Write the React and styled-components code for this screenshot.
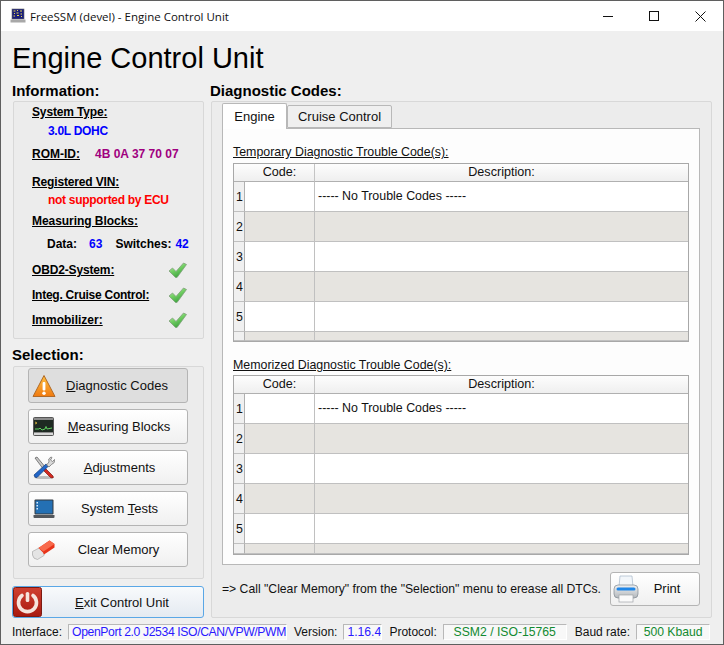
import React from 'react'
import styled, { createGlobalStyle } from 'styled-components'

const Global = createGlobalStyle`
  html, body { margin: 0; padding: 0; background: #efefef; }
  * { box-sizing: border-box; }
`

const Win = styled.div`
  width: 724px;
  height: 645px;
  overflow: hidden;
  display: flex;
  flex-direction: column;
  background: #efefef;
  border: 1px solid #5f5f5f;
  font-family: "Liberation Sans", Arial, sans-serif;
  color: #000;
`

const TitleBar = styled.div`
  height: 30px;
  flex: none;
  background: #fff;
  display: flex;
  align-items: center;
  padding-left: 9px;
  font: 11.5px "Open Sans", "Noto Sans", sans-serif;
`

const TitleText = styled.span`
  margin-left: 4px;
  flex: 1;
  color: #111;
`

const WinBtn = styled.div`
  width: 46px;
  height: 30px;
  display: flex;
  align-items: center;
  justify-content: center;
`

const Heading = styled.h1`
  margin: 0;
  padding: 9px 0 0 11px;
  height: 51px;
  flex: none;
  font-size: 29px;
  line-height: 36px;
  font-weight: 400;
  color: #000;
`

const Columns = styled.div`
  display: flex;
  flex: none;
  height: 537px;
  padding-left: 11px;
`

const LeftCol = styled.div`
  width: 193px;
  display: flex;
  flex-direction: column;
`

const RightCol = styled.div`
  width: 504px;
  margin-left: 5px;
  display: flex;
  flex-direction: column;
`

const Section = styled.div`
  font-size: 15px;
  line-height: 18px;
  font-weight: 700;
  height: 18px;
  margin-top: ${p => p.$top || 0}px;
`

const Panel = styled.div`
  border: 1px solid #d8d8d8;
  border-radius: 2px;
  background: #ececec;
  margin-left: 1px;
`

const InfoPanel = styled(Panel)`
  width: 191px;
  height: 238px;
  margin-top: 1px;
  padding: 0 0 0 18px;
`

const InfoRow = styled.div`
  display: flex;
  align-items: center;
  height: 16px;
  line-height: 16px;
  font-size: 12px;
  font-weight: 700;
  margin-top: ${p => p.$gap}px;
  padding-left: ${p => p.$indent || 0}px;
`

const Label = styled.span`
  text-decoration: underline;
  letter-spacing: ${p => p.$tight || 0}px;
`

const Value = styled.span`
  color: ${p => p.$color};
  margin-left: ${p => p.$left || 0}px;
  letter-spacing: ${p => p.$tight || 0}px;
`

const Plain = styled.span`
  margin-left: ${p => p.$left || 0}px;
`

const CheckSlot = styled.span`
  margin-left: auto;
  margin-right: 15px;
  display: flex;
`

const SelPanel = styled(Panel)`
  width: 191px;
  height: 213px;
  margin-top: 2px;
  padding: 1px 0 0 14px;
  display: flex;
  flex-direction: column;
  gap: 6px;
`

const Button = styled.div`
  width: 160px;
  height: 35px;
  border: 1px solid #b4b4b4;
  border-radius: 3px;
  background: ${p => p.$active ? '#dedede' : 'linear-gradient(to bottom, #fff, #f0f0f0)'};
  display: flex;
  align-items: center;
  font-size: 13px;
  color: #111;
  flex: none;
`

const IconSlot = styled.span`
  width: 29px;
  flex: none;
  display: flex;
  justify-content: center;
`

const BtnText = styled.span`
  flex: 1;
  text-align: center;
  padding-right: ${p => p.$pr || 0}px;
  white-space: nowrap;
`

const ExitButton = styled.div`
  width: 192px;
  height: 32px;
  margin-top: 7px;
  border: 1px solid #5aa7e6;
  border-radius: 3px;
  background: linear-gradient(to bottom, #f8fafc, #e4eaf1);
  display: flex;
  align-items: center;
  font-size: 13px;
  color: #111;
`

const CodesPanel = styled(Panel)`
  width: 501px;
  height: 517px;
  margin-top: 1px;
  padding: 1px 11px 0 10px;
  display: flex;
  flex-direction: column;
`

const Tabs = styled.div`
  display: flex;
  align-items: flex-end;
  height: 25px;
  flex: none;
`

const Tab = styled.div`
  height: ${p => p.$active ? 26 : 23}px;
  width: ${p => p.$w}px;
  margin-bottom: ${p => p.$active ? -1 : 0}px;
  position: relative;
  z-index: ${p => p.$active ? 1 : 0};
  background: ${p => p.$active ? '#fff' : '#efefef'};
  border: 1px solid #b8b8b8;
  border-bottom: ${p => p.$active ? 'none' : '1px solid #b8b8b8'};
  border-radius: 2px 2px 0 0;
  font-size: 13px;
  line-height: ${p => p.$active ? 26 : 22}px;
  text-align: center;
  color: #111;
`

const TabPane = styled.div`
  flex: none;
  width: 478px;
  height: 437px;
  background: #fdfdfd;
  border: 1px solid #b8b8b8;
  padding: 0 10px;
`

const TableLabel = styled.div`
  height: 14px;
  line-height: 14px;
  font-size: 12.4px;
  text-decoration: underline;
  color: #111;
  white-space: nowrap;
  margin-top: 16px;
  margin-bottom: ${p => p.$bottom}px;
`

const DtcGrid = styled.div`
  width: 456px;
  height: ${p => p.$h}px;
  overflow: hidden;
  border: 1px solid #a8a8a8;
  display: grid;
  grid-template-columns: 11px 70px 1fr;
  grid-template-rows: 18px repeat(5, 30px) 1fr;
  font-size: 12.4px;
  color: #111;
`

const Head = styled.div`
  grid-column: ${p => p.$col};
  background: linear-gradient(to bottom, #fdfdfd, #efefef);
  border-bottom: 1px solid #b0b0b0;
  border-right: ${p => p.$last ? 'none' : '1px solid #c4c4c4'};
  text-align: center;
  line-height: 17px;
  font-size: 12.6px;
`

const RowNum = styled.div`
  background: #f0f0f0;
  border-right: 1px solid #b0b0b0;
  border-bottom: 1px solid #c0c0c0;
  display: flex;
  align-items: center;
  padding-left: 2px;
`

const Cell = styled.div`
  background: ${p => p.$alt ? '#e6e4e0' : '#fff'};
  border-right: ${p => p.$last ? 'none' : '1px solid #c0c0c0'};
  border-bottom: 1px solid #c0c0c0;
  display: flex;
  align-items: center;
  padding: 0 0 2px 3px;
  white-space: nowrap;
`

const NoteRow = styled.div`
  display: flex;
  align-items: center;
  margin-top: 6px;
  height: 35px;
  font-size: 12.2px;
  color: #111;
`

const Note = styled.span`
  flex: 1;
  white-space: nowrap;
`

const PrintButton = styled(Button)`
  width: 90px;
  height: 34px;
`

const StatusBar = styled.div`
  display: flex;
  align-items: center;
  height: 18px;
  margin-top: 4px;
  padding-left: 11px;
  font-size: 12px;
  color: #111;
`

const StatusBox = styled.div`
  width: ${p => p.$w}px;
  height: 16px;
  margin: 0 ${p => p.$mr}px 0 ${p => p.$ml}px;
  line-height: 14px;
  font-size: 12.2px;
  letter-spacing: ${p => p.$tight || 0}px;
  background: #f8f8f8;
  border: 1px solid #b8b8b8;
  border-right-color: #fff;
  border-bottom-color: #fff;
  overflow: hidden;
  white-space: nowrap;
  padding-left: ${p => p.$center ? 0 : 3}px;
  text-align: ${p => p.$center ? 'center' : 'left'};
  color: ${p => p.$color};
`

const Check = () => (
  <svg width="20" height="17" viewBox="0 0 20 17">
    <defs>
      <linearGradient id="chk" x1="0" y1="0" x2="0.6" y2="1">
        <stop offset="0" stopColor="#d8f4cc" />
        <stop offset="0.5" stopColor="#74d064" />
        <stop offset="1" stopColor="#38a03c" />
      </linearGradient>
    </defs>
    <path d="M1 9 L4.5 6 L8 9.5 L15.5 1 L18.5 2.5 L9 15.5 L7.5 15.5 Z" fill="url(#chk)" stroke="#7f9f7a" strokeWidth="0.8" />
  </svg>
)

const WarnIcon = () => (
  <svg width="24" height="24" viewBox="0 0 24 24">
    <defs>
      <linearGradient id="warn" x1="0" y1="0" x2="0" y2="1">
        <stop offset="0" stopColor="#ffc040" />
        <stop offset="1" stopColor="#f07a10" />
      </linearGradient>
    </defs>
    <path d="M12 1.5 L23 22.5 L1 22.5 Z" fill="url(#warn)" stroke="#b06a28" strokeWidth="1" strokeLinejoin="round" />
    <rect x="10.6" y="8" width="2.8" height="8.5" rx="1" fill="#fff" />
    <circle cx="12" cy="19.2" r="1.7" fill="#fff" />
  </svg>
)

const MonitorIcon = () => (
  <svg width="21" height="19" viewBox="0 0 21 19">
    <rect x="0.5" y="0.5" width="20" height="18" rx="1" fill="#8c8c8c" stroke="#555" />
    <rect x="1" y="3" width="19" height="12" fill="#1e2a22" />
    <path d="M2 12 L6 12 L7 11 L9 13 L12 12 L13 9.5 L14 12 L19 11" fill="none" stroke="#5ed05e" strokeWidth="1" />
    <path d="M2 5 L4 6 L2 7" fill="none" stroke="#e8c040" strokeWidth="0.8" />
    <rect x="1" y="16" width="19" height="2" fill="#d8d8d8" />
  </svg>
)

const ToolsIcon = () => (
  <svg width="24" height="24" viewBox="0 0 24 24">
    <ellipse cx="12" cy="21.5" rx="10" ry="1.6" fill="#bbb" />
    <path d="M3 2 L5 1 L14 12 L12 14 Z" fill="#c8c8c8" stroke="#555" strokeWidth="0.7" />
    <path d="M13 12 L21 20 Q22 22 20 22 L18.5 21.5 L11 14 Z" fill="#d42a20" stroke="#7a1510" strokeWidth="0.7" />
    <path d="M2 19 L14 8 L16.5 10 L5 21.5 Q2.5 22 2 19 Z" fill="#2066c8" stroke="#123a7a" strokeWidth="0.7" />
    <path d="M14.5 9 L17 6 Q15.5 2.5 19 1 L20 1.5 L18.5 4 L20.5 5.5 L22.5 3.5 Q23.5 7 19.5 8.5 L17 11 Z" fill="#d8d8d8" stroke="#666" strokeWidth="0.7" />
  </svg>
)

const LaptopIcon = () => (
  <svg width="22" height="20" viewBox="0 0 22 20">
    <rect x="1.5" y="0.5" width="19" height="15" rx="1" fill="#33383e" />
    <rect x="2.5" y="1.5" width="17" height="13" fill="#2470b4" />
    <rect x="3.5" y="3" width="1.5" height="1.5" fill="#d8ecff" />
    <rect x="3.5" y="6" width="1.5" height="1.5" fill="#d8ecff" />
    <rect x="3.5" y="9" width="1.5" height="1.5" fill="#d8ecff" />
    <path d="M0.5 16 H21.5 V18 Q21.5 19 20.5 19 H1.5 Q0.5 19 0.5 18 Z" fill="#53575c" />
  </svg>
)

const EraserIcon = () => (
  <svg width="23" height="20" viewBox="0 0 23 20">
    <path d="M0.5 11.5 L8 7.5 L12 13 L12 15.5 L5.5 19.5 Q1 19 0.5 15 Z" fill="#e4e4e4" stroke="#a8a8a8" strokeWidth="0.7" />
    <path d="M6.5 8 L17.5 0.5 L22.5 4 L22.5 7.5 L12 14.5 L11 12.5 Z" fill="#e8341a" />
    <path d="M6.5 8 L17.5 0.5 L22.5 4 L11.5 11.5 Z" fill="#f86a4c" />
  </svg>
)

const PowerIcon = () => (
  <svg width="29" height="30" viewBox="0 0 29 30">
    <defs>
      <linearGradient id="pw" x1="0" y1="0" x2="0" y2="1">
        <stop offset="0" stopColor="#d04030" />
        <stop offset="1" stopColor="#a81a10" />
      </linearGradient>
    </defs>
    <rect x="0.5" y="0.5" width="28" height="29" rx="2" fill="url(#pw)" stroke="#7c1a12" />
    <path d="M9 8.5 A9 9 0 1 0 20 8.5" fill="none" stroke="#f6e4dc" strokeWidth="3.6" strokeLinecap="round" />
    <rect x="12.7" y="5" width="3.6" height="10" rx="1.6" fill="#f6e4dc" />
  </svg>
)

const PrinterIcon = () => (
  <svg width="26" height="28" viewBox="0 0 26 28">
    <defs>
      <linearGradient id="pr" x1="0" y1="0" x2="0" y2="1">
        <stop offset="0" stopColor="#eef0f2" />
        <stop offset="1" stopColor="#b4b8bc" />
      </linearGradient>
    </defs>
    <path d="M7 1 H19 L20 12 H6 Z" fill="#f2f6fa" stroke="#a8b8c8" strokeWidth="0.7" />
    <rect x="1" y="10" width="24" height="13" rx="4" fill="url(#pr)" stroke="#808890" strokeWidth="0.7" />
    <rect x="3.5" y="12.5" width="19" height="3" rx="1.5" fill="#1e86e8" />
    <rect x="6" y="20" width="14" height="7" fill="#fafafa" stroke="#a0a4a8" strokeWidth="0.7" />
  </svg>
)

const AppIcon = () => (
  <svg width="16" height="16" viewBox="0 0 16 16">
    <rect x="2" y="1" width="12" height="10" fill="#1a1f7a" stroke="#666" strokeWidth="0.6" />
    <path d="M3.5 3 h2 M7 2.5 h1 M10 3 h2 M4 5.5 h1 M6.5 5 h2 M10.5 6 h1.5 M3.5 8 h1.5 M7 7.5 h2 M11 8.5 h1" stroke="#e8d850" strokeWidth="1" />
    <rect x="0.5" y="11.5" width="15" height="3" fill="#a8a8a8" />
  </svg>
)

const DtcTable = ({ height }) => (
  <DtcGrid $h={height}>
    <Head $col="1 / 2" $last />
    <Head $col="2 / 3">Code:</Head>
    <Head $col="3 / 4" $last>Description:</Head>
    {[1, 2, 3, 4, 5].map(n => (
      <React.Fragment key={n}>
        <RowNum>{n}</RowNum>
        <Cell $alt={n % 2 === 0} />
        <Cell $alt={n % 2 === 0} $last>{n === 1 ? '----- No Trouble Codes -----' : ''}</Cell>
      </React.Fragment>
    ))}
    <RowNum />
    <Cell $alt />
    <Cell $alt $last />
  </DtcGrid>
)

export default function App() {
  return (
    <Win>
      <Global />
      <TitleBar>
        <AppIcon />
        <TitleText>FreeSSM (devel) - Engine Control Unit</TitleText>
        <WinBtn>
          <svg width="11" height="11" viewBox="0 0 11 11"><path d="M0 5.5 H10" stroke="#111" /></svg>
        </WinBtn>
        <WinBtn>
          <svg width="11" height="11" viewBox="0 0 11 11"><rect x="0.5" y="0.5" width="9" height="9" fill="none" stroke="#111" /></svg>
        </WinBtn>
        <WinBtn>
          <svg width="11" height="11" viewBox="0 0 11 11"><path d="M0.5 0.5 L10.5 10.5 M10.5 0.5 L0.5 10.5" stroke="#111" /></svg>
        </WinBtn>
      </TitleBar>
      <Heading>Engine Control Unit</Heading>
      <Columns>
        <LeftCol>
          <Section>Information:</Section>
          <InfoPanel>
            <InfoRow $gap={2}><Label $tight={-0.15}>System Type:</Label></InfoRow>
            <InfoRow $gap={3} $indent={16}><Value $color="#0000ff" $tight={-0.3}>3.0L DOHC</Value></InfoRow>
            <InfoRow $gap={7}><Label>ROM-ID:</Label><Value $color="#a0007f" $left={15}>4B 0A 37 70 07</Value></InfoRow>
            <InfoRow $gap={12}><Label $tight={-0.15}>Registered VIN:</Label></InfoRow>
            <InfoRow $gap={2} $indent={16}><Value $color="#ff0000" $tight={-0.3}>not supported by ECU</Value></InfoRow>
            <InfoRow $gap={5}><Label $tight={-0.05}>Measuring Blocks:</Label></InfoRow>
            <InfoRow $gap={7} $indent={15}>
              <span>Data:</span><Value $color="#0000ff" $left={12}>63</Value>
              <Plain $left={13}>Switches:</Plain><Value $color="#0000ff" $left={4}>42</Value>
            </InfoRow>
            <InfoRow $gap={10}><Label $tight={-0.15}>OBD2-System:</Label><CheckSlot><Check /></CheckSlot></InfoRow>
            <InfoRow $gap={9}><Label $tight={-0.25}>Integ. Cruise Control:</Label><CheckSlot><Check /></CheckSlot></InfoRow>
            <InfoRow $gap={9}><Label>Immobilizer:</Label><CheckSlot><Check /></CheckSlot></InfoRow>
          </InfoPanel>
          <Section $top={7}>Selection:</Section>
          <SelPanel>
            <Button $active><IconSlot><WarnIcon /></IconSlot><BtnText $pr={11}><u>D</u>iagnostic Codes</BtnText></Button>
            <Button><IconSlot><MonitorIcon /></IconSlot><BtnText $pr={7}><u>M</u>easuring Blocks</BtnText></Button>
            <Button><IconSlot><ToolsIcon /></IconSlot><BtnText $pr={6}><u>A</u>djustments</BtnText></Button>
            <Button><IconSlot><LaptopIcon /></IconSlot><BtnText $pr={6}>System <u>T</u>ests</BtnText></Button>
            <Button><IconSlot><EraserIcon /></IconSlot><BtnText $pr={8}>Clear Memory</BtnText></Button>
          </SelPanel>
          <ExitButton><PowerIcon /><BtnText $pr={1}><u>E</u>xit Control Unit</BtnText></ExitButton>
        </LeftCol>
        <RightCol>
          <Section>Diagnostic Codes:</Section>
          <CodesPanel>
            <Tabs>
              <Tab $active $w={65}>Engine</Tab>
              <Tab $w={105}>Cruise Control</Tab>
            </Tabs>
            <TabPane>
              <TableLabel $bottom={4}>Temporary Diagnostic Trouble Code(s):</TableLabel>
              <DtcTable height={179} />
              <TableLabel $bottom={3}>Memorized Diagnostic Trouble Code(s):</TableLabel>
              <DtcTable height={180} />
            </TabPane>
            <NoteRow>
              <Note>=&gt; Call "Clear Memory" from the "Selection" menu to erease all DTCs.</Note>
              <PrintButton><IconSlot><PrinterIcon /></IconSlot><BtnText $pr={5}>Print</BtnText></PrintButton>
            </NoteRow>
          </CodesPanel>
        </RightCol>
      </Columns>
      <StatusBar>
        <span>Interface:</span>
        <StatusBox $w={219} $ml={6} $mr={7} $tight={-0.38} $color="#2a18ff">OpenPort 2.0 J2534 ISO/CAN/VPW/PWM</StatusBox>
        <span>Version:</span>
        <StatusBox $w={39} $ml={6} $mr={7} $color="#2a18ff">1.16.4</StatusBox>
        <span>Protocol:</span>
        <StatusBox $w={124} $ml={6} $mr={8} $center $color="#128a30">SSM2 / ISO-15765</StatusBox>
        <span>Baud rate:</span>
        <StatusBox $w={74} $ml={6} $mr={0} $center $color="#128a30">500 Kbaud</StatusBox>
      </StatusBar>
    </Win>
  )
}
